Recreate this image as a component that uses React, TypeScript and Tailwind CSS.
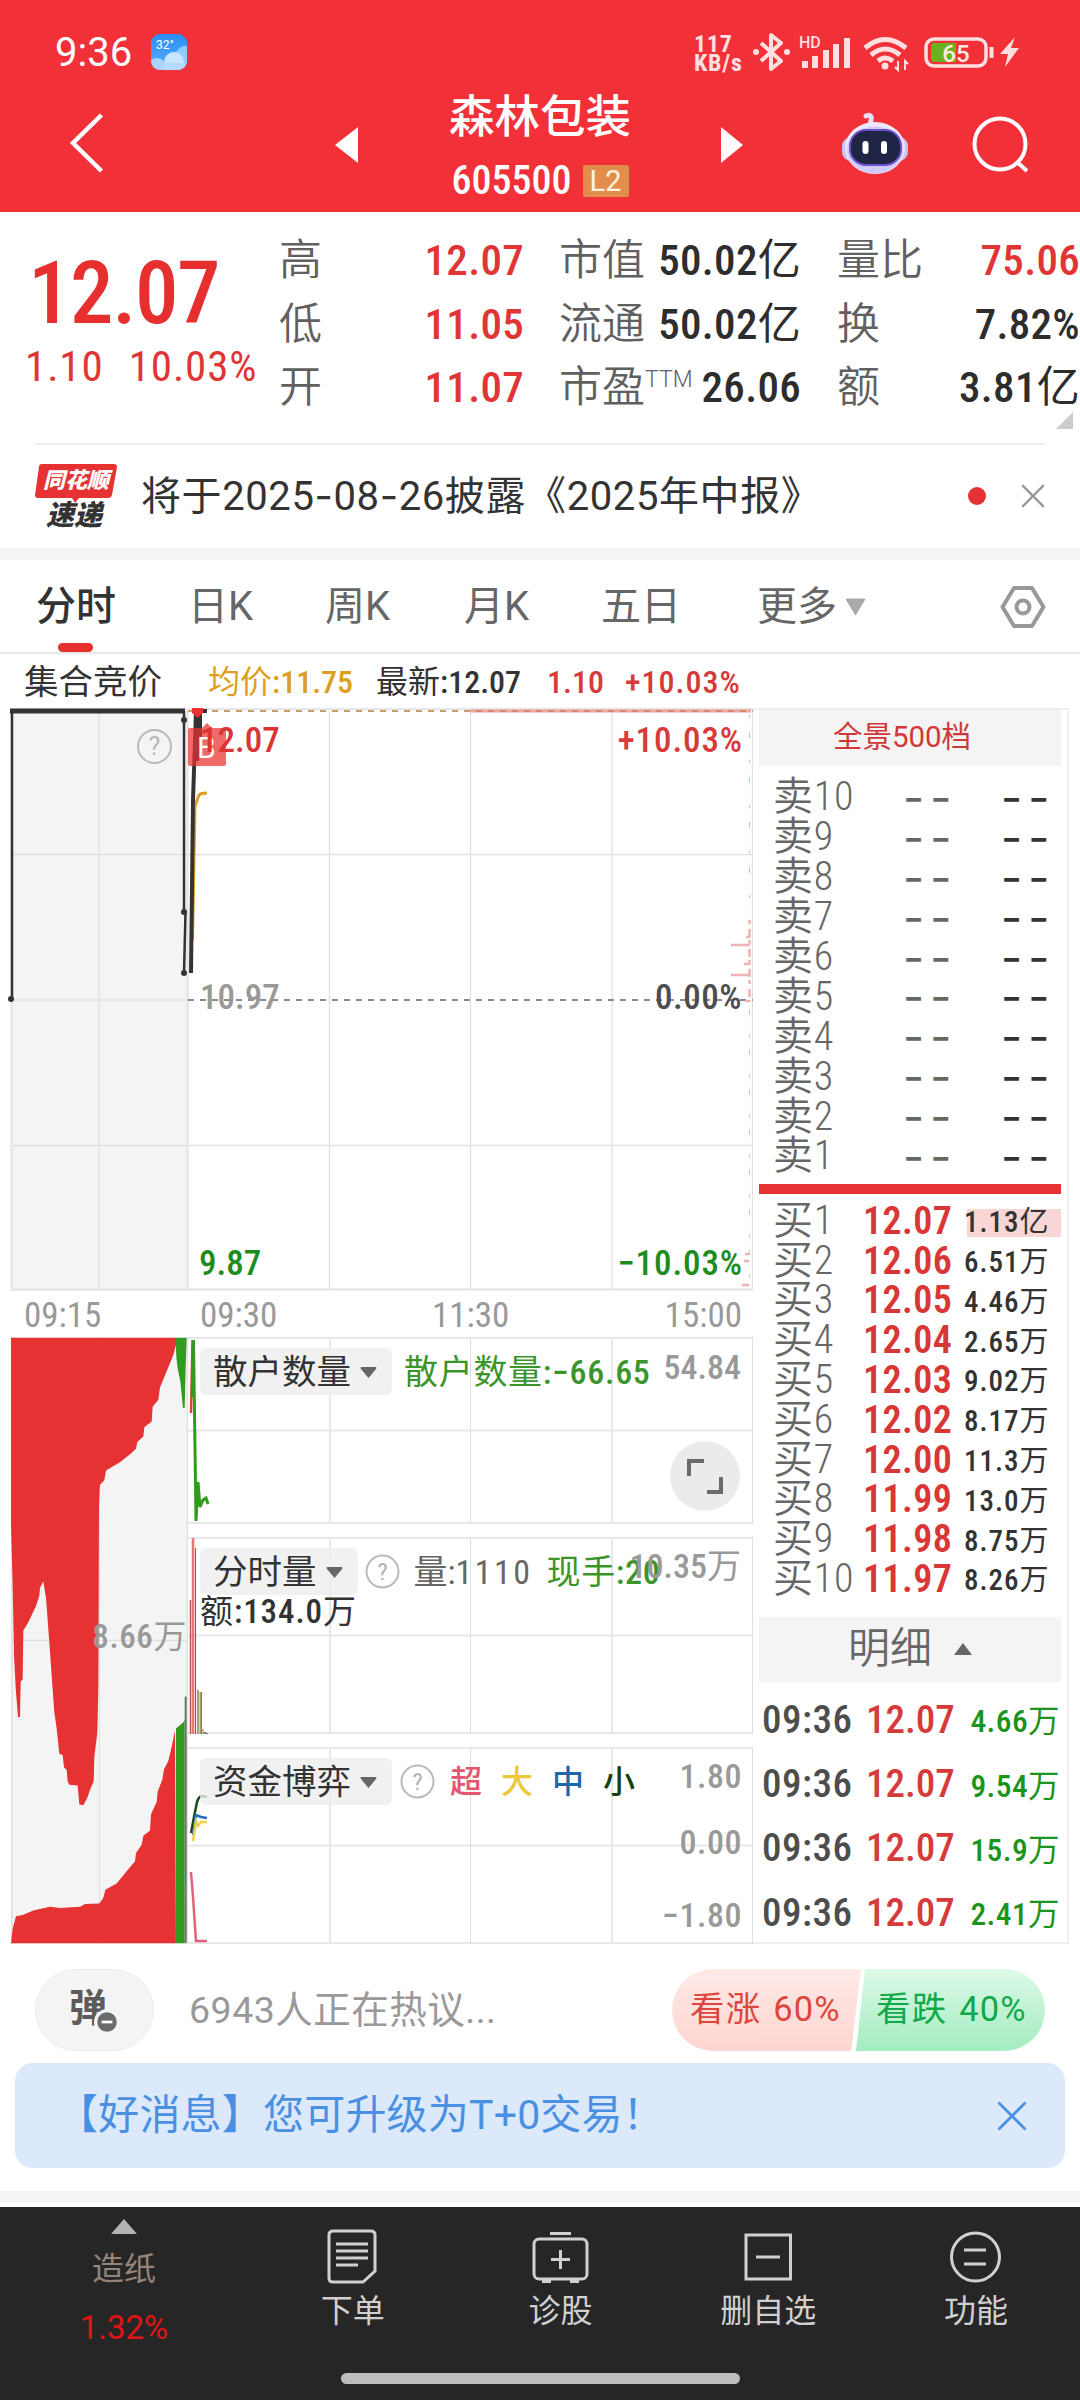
import type { ReactNode } from "react"

const COND = "font-['Roboto_Condensed','Noto_Sans_CJK_SC',sans-serif]"

const QUOTE_ROWS = [
  { a: "高", av: "12.07", b: "市值", bv: "50.02亿", c: "量比", cv: "75.06", cUp: true },
  { a: "低", av: "11.05", b: "流通", bv: "50.02亿", c: "换", cv: "7.82%" },
  { a: "开", av: "11.07", b: "市盈", sup: "TTM", bv: "26.06", c: "额", cv: "3.81亿" },
]

const SELLS = [10, 9, 8, 7, 6, 5, 4, 3, 2, 1]

const BUYS = [
  ["12.07", "1.13亿"],
  ["12.06", "6.51万"],
  ["12.05", "4.46万"],
  ["12.04", "2.65万"],
  ["12.03", "9.02万"],
  ["12.02", "8.17万"],
  ["12.00", "11.3万"],
  ["11.99", "13.0万"],
  ["11.98", "8.75万"],
  ["11.97", "8.26万"],
]

const TRADES = ["4.66万", "9.54万", "15.9万", "2.41万"]

export default function App() {
  return (
    <div className="h-[2400px] w-[1080px] overflow-hidden bg-white font-[Roboto,'Noto_Sans_CJK_SC',sans-serif] whitespace-nowrap text-[#333]">
      <header className="h-[212px] bg-[#f23038] text-white">
        <StatusBar />
        <TitleBar />
      </header>
      <Quote />
      <Notice />
      <div className="h-3 bg-[#f4f4f4]" />
      <Tabs />
      <InfoLine />
      <main className="flex h-[1236px]">
        <div className="w-[753px] shrink-0">
          <PriceChart />
          <div className={`${COND} flex h-[46px] items-center pt-[3px] pl-[24px] text-[35px] leading-none text-[#999]`}>
            <span className="w-[176px]">09:15</span>
            <span className="w-[232px]">09:30</span>
            <span className="grow">11:30</span>
            <span className="pr-[11px]">15:00</span>
          </div>
          <div className="flex">
            <AuctionVolume />
            <div className="flex w-[565px] flex-col gap-[13px]">
              <RetailPanel />
              <VolumePanel />
              <CapitalPanel />
            </div>
          </div>
        </div>
        <OrderBook />
      </main>
      <Discussion />
      <div className="mx-[15px] mt-3 flex h-[105px] items-center justify-between rounded-[18px] bg-[#dbe9fb] pr-[38px] pl-[42px] text-[41px] text-[#4a90e2]">
        <span className="tracking-[.2px]">【好消息】您可升级为T+0交易！</span>
        <Cross className="size-[30px]" width={1.8} />
      </div>
      <div className="mt-[23px] h-3 bg-[#f4f4f4]" />
      <BottomNav />
    </div>
  )
}

/* medium digits with regular-weight Chinese characters */
function Mixed({ text }: { text: string }) {
  return (
    <span className="font-medium">
      {text.split(/([\u4e00-\u9fff]+)/).map((part, i) =>
        i % 2 ? <span key={i} className="font-normal">{part}</span> : part,
      )}
    </span>
  )
}

function StatusBar() {
  return (
    <div className="flex h-[104px] items-center pl-[55px]">
      <span className="mt-0.5 w-[96px] text-[40px]">9:36</span>
      <svg className="size-9" viewBox="0 0 36 36">
        <defs>
          <linearGradient id="sky" x1="0" y1="0" x2="0" y2="1">
            <stop offset="0" stopColor="#2b8df7" />
            <stop offset="1" stopColor="#58b0fb" />
          </linearGradient>
          <clipPath id="skyClip"><rect width="36" height="36" rx="9" /></clipPath>
        </defs>
        <g clipPath="url(#skyClip)">
          <rect width="36" height="36" fill="url(#sky)" />
          <circle cx="34" cy="21" r="9" fill="#8fcbfd" />
          <circle cx="23" cy="28" r="10" fill="#c9e4fe" />
          <circle cx="6" cy="33" r="9" fill="#a9d5fd" />
          <rect x="12" y="29" width="24" height="8" fill="#b4dafe" />
        </g>
        <text x="5" y="15" fontSize="12" fill="#fff">32°</text>
      </svg>
      <div className={`${COND} mt-1 ml-[507px] w-[59px] text-[24px] leading-[19px] font-bold tracking-[.8px] text-[#ffe0e1]`}>
        <div>117</div>
        <div>KB/s</div>
      </div>
      <svg className="h-10 w-[270px]" viewBox="753 32 270 40" fill="none" stroke="#ffdfe0">
        <path d="M761 43L781 61L771 69V35L781 43L761 61" strokeWidth="4" strokeLinejoin="round" />
        <circle cx="756" cy="52" r="3" fill="#ffdfe0" stroke="none" />
        <circle cx="787" cy="52" r="3" fill="#ffdfe0" stroke="none" />
        <text x="799" y="48" fontSize="16" fontWeight="500" fill="#ffdfe0" stroke="none">HD</text>
        <path d="M805 68V61M815 68V56M826 68V50M836 68V44M847 68V38" strokeWidth="6" />
        <path d="M865 48Q885 31 906 48M871 55Q885 43 900 55" strokeWidth="5" />
        <path d="M878 61Q885 55 893 61" strokeWidth="5" />
        <circle cx="885" cy="66" r="3.5" fill="#ffdfe0" stroke="none" />
        <path d="M898 61V70L895 67M905 70V61L908 64" strokeWidth="2" />
        <rect x="926" y="39" width="60" height="27" rx="8" strokeWidth="3.5" />
        <path d="M991.5 47V58" strokeWidth="4" />
        <path d="M934 43H956V62H934Q931 62 931 59V46Q931 43 934 43Z" fill="#68b31d" stroke="none" />
        <text x="956" y="61.5" textAnchor="middle" fontSize="24" fontWeight="500" fill="#ffe9e0" stroke="none">65</text>
        <path d="M1015 37L1000 54H1008L1005 67L1019 48H1011Z" fill="#ffdfe0" stroke="none" />
      </svg>
    </div>
  )
}

function TitleBar() {
  return (
    <div className="flex h-[108px] items-center">
      <svg className="-mt-[30px] ml-[68px] h-[60px] w-[38px]" viewBox="68 114 38 60" fill="none" stroke="#fff" strokeWidth="4.5">
        <path d="M101.5 116L73 144L101.5 172" />
      </svg>
      <svg className="-mt-[26px] ml-[229px] h-9 w-[23px]" viewBox="0 0 23 36">
        <path d="M23 0V36L0 18Z" fill="#fff" />
      </svg>
      <div className="-mt-[20px] ml-[91px] w-[182px] text-center">
        <div className="text-[45.5px] leading-[65px] font-medium">森林包装</div>
        <div className="flex h-[61px] items-center justify-center gap-[11px]">
          <span className={`${COND} text-[40px] leading-none font-medium`}>605500</span>
          <span className="h-8 w-[46px] rounded-[2px] bg-[#e28d4b] text-[29px] leading-[33px] text-[#fff3e0]">L2</span>
        </div>
      </div>
      <svg className="-mt-[26px] ml-[90px] h-9 w-[22px]" viewBox="0 0 22 36">
        <path d="M0 0V36L22 18Z" fill="#fff" />
      </svg>
      <svg className="-mt-7 ml-[98px] h-[64px] w-[68px]" viewBox="841 112 68 64">
        <path d="M870 124Q874 113 866 116" fill="none" stroke="#e9dcf7" strokeWidth="5" strokeLinecap="round" />
        <rect x="842" y="137" width="66" height="24" rx="9" fill="#c9c4f3" />
        <ellipse cx="875" cy="148" rx="30" ry="26" fill="#ece9fc" />
        <ellipse cx="875" cy="150" rx="28" ry="23.5" fill="#cfcdf7" />
        <rect x="850" y="130" width="51" height="35" rx="16" fill="#1f2545" stroke="#6a4fc9" strokeWidth="2" />
        <rect x="862.5" y="141" width="6" height="13" rx="3" fill="#fff" />
        <rect x="881" y="141" width="6" height="13" rx="3" fill="#fff" />
      </svg>
      <svg className="-mt-[26px] ml-[62px] h-[60px] w-[60px]" viewBox="971 116 60 60" fill="none" stroke="#fff" strokeWidth="4">
        <circle cx="1000" cy="145" r="25.5" />
        <path d="M1017 163L1027 172" />
      </svg>
    </div>
  )
}

function Quote() {
  return (
    <section className="relative flex h-[231px] text-[#e13434]">
      <div className={`${COND} w-[279px] pt-[31px]`}>
        <div className="pl-[28px] text-[87px] leading-[100px] font-medium tracking-[-1.4px] text-[#e63030]">12.07</div>
        <div className="flex gap-[25px] pt-px pl-[25px] text-[43px] leading-[44px] tracking-[.9px]">
          <span>1.10</span>
          <span>10.03%</span>
        </div>
      </div>
      <div className="flex flex-col pt-[17px] text-[43px] leading-none">
        {QUOTE_ROWS.map((r) => (
          <div key={r.a} className="flex h-[63.5px] items-center">
            <span className="w-[78px] font-[350] text-[#606060]">{r.a}</span>
            <span className={`${COND} w-[167px] text-right tracking-[.3px]`}><Mixed text={r.av} /></span>
            <span className="flex w-[277px] items-center justify-between pl-[35px]">
              <span className="flex font-[350] text-[#606060]">
                {r.b}
                {r.sup && <span className="text-[23px] leading-[28px]">{r.sup}</span>}
              </span>
              <span className={`${COND} tracking-[.3px] text-[#2d2d2d]`}><Mixed text={r.bv} /></span>
            </span>
            <span className="w-[95px] pl-[36px] font-[350] text-[#606060]">{r.c}</span>
            <span className={`${COND} w-[184px] text-right tracking-[.3px] ${r.cUp ? "" : "text-[#2d2d2d]"}`}><Mixed text={r.cv} /></span>
          </div>
        ))}
      </div>
      <svg className="absolute right-[7px] bottom-[14px] h-[17px] w-[17px]" viewBox="0 0 17 17">
        <path d="M17 0V17H0Z" fill="#ccc" />
      </svg>
    </section>
  )
}

function Notice() {
  return (
    <section className="mx-[35px] flex h-[105px] items-center border-t-2 border-[#eee] pb-1">
      <div className="relative mt-1 h-[68px] w-[82px]">
        <svg className="absolute inset-0" viewBox="0 0 82 68">
          <path d="M7 1H79Q82 1 82 4L77 32Q76 35 73 35H44L40 40L37 35H3Q0 35 0 32L4 4Q4 1 7 1Z" fill="#e63232" />
        </svg>
        <div className="relative text-center text-[22px] leading-[35px] font-black text-white italic">同花顺</div>
        <div className="pt-0.5 pr-1 text-center text-[28px] leading-[32px] font-black italic">速递</div>
      </div>
      <span className="ml-[24px] grow pt-[3px] text-[40px] tracking-[.6px]">
        将于2025<Hyphen />08<Hyphen />26披露《2025年中报》
      </span>
      <span className="mt-0.5 size-[18px] rounded-full bg-[#e63232]" />
      <Cross className="mt-0.5 ml-[35px] size-[24px] text-[#999]" width={2} />
    </section>
  )
}

function Hyphen() {
  return <span className="font-['Inter']">-</span>
}

function Tabs() {
  return (
    <nav className="flex h-[94px] items-center border-b-2 border-[#e8e8e8] pt-0.5 pl-[36px] text-[40px] leading-none text-[#666]">
      <span className="relative flex h-full w-[152px] items-center font-medium text-[#333]">
        分时
        <i className="absolute bottom-0 left-[22px] h-[9px] w-[35px] rounded-full bg-[#e63030]" />
      </span>
      <span className="w-[137px]">日K</span>
      <span className="w-[139px]">周K</span>
      <span className="w-[137px]">月K</span>
      <span className="w-[156px]">五日</span>
      <span>更多</span>
      <svg className="ml-[8px] h-[18px] w-[21px]" viewBox="0 0 21 18">
        <path d="M1 1H20L10.5 17Z" fill="#aaa" stroke="#aaa" strokeWidth="1" strokeLinejoin="round" />
      </svg>
      <svg className="ml-[134px] h-[44px] w-[46px]" viewBox="0 0 46 44" fill="none" stroke="#999" strokeWidth="4">
        <path d="M14 3H32L43.5 22L32 41H14L2.5 22Z" strokeLinejoin="round" />
        <circle cx="23" cy="22" r="6.5" />
      </svg>
    </nav>
  )
}

function InfoLine() {
  return (
    <div className={`${COND} flex h-[54px] items-center pt-[2px] text-[32px] leading-none`}>
      <span className="w-[208px] pl-[24px] text-[34.5px]">集合竞价</span>
      <span className="w-[168px] text-[#dd9f20]"><Mixed text="均价:11.75" /></span>
      <span className="w-[171px]"><Mixed text="最新:12.07" /></span>
      <span className="w-[78px] font-medium text-[#d63a3a]">1.10</span>
      <span className="font-medium tracking-[1px] text-[#d63a3a]">+10.03%</span>
    </div>
  )
}

function PriceChart() {
  return (
    <svg className="block h-[583px] w-[753px]" viewBox="0 708 753 583" fill="none">
      <rect x="11" y="708" width="177" height="583" fill="#f4f4f4" />
      <path d="M99 709V1290M329.5 709V1290M470.5 709V1290M612 709V1290M752.5 709V1290M11 854.5H753M11 1145.5H753" stroke="#e0e0e0" strokeWidth="1.3" />
      <path d="M187.5 709V1290M11.5 709V1290M11 1289.5H753M11 1000H188M188 709H753" stroke="#e6e6e6" strokeWidth="2.5" />
      <path d="M188 711H753" stroke="#c3a06a" strokeWidth="2" strokeDasharray="6 6" />
      <path d="M470 711H751" stroke="#e87a70" strokeOpacity=".65" strokeWidth="3" />
      <path d="M188 1000H753" stroke="#8a8a8a" strokeWidth="2" strokeDasharray="6 6" />

      {/* price distribution on the right edge */}
      <g stroke="#efb3b3" strokeWidth="2.5">
        <path d="M731 945H750M744 964H750M731 975H750M746 937H750M745 1001H750M744 1261H749M742 1285H749M745 1254H749" />
        <path d="M749.5 715V900" strokeWidth="1" strokeDasharray="3 14 6 22" />
        <path d="M749.5 920V1002" strokeDasharray="4 5 8 3" />
        <path d="M749.5 1010V1289" strokeWidth="1" strokeDasharray="5 20 3 12" />
      </g>

      {/* auction session */}
      <path d="M12 999V711" stroke="#333" strokeWidth="2.5" />
      <path d="M10 711H185" stroke="#333" strokeWidth="5" />
      <path d="M184 711V912H185.5L184 973" stroke="#333" strokeWidth="2.5" />
      <g fill="#333">
        <circle cx="11" cy="999" r="3" />
        <circle cx="184" cy="720" r="3" />
        <circle cx="184" cy="912" r="3" />
        <circle cx="184" cy="973" r="3" />
      </g>

      {/* continuous session */}
      <path d="M192.5 940L195 806L199 795Q201 793 207 793" stroke="#dd9f20" strokeWidth="3" />
      <path d="M191 973L193 800L196 711" stroke="#333" strokeWidth="4" />
      <path d="M194 711H202V748L199 761H195Z" fill="#333" />
      <path d="M198 711H207" stroke="#333" strokeWidth="4" />
      <path d="M192 708H203V713L197.5 718L192 713Z" fill="#e63232" />
      <path d="M190 728H202L207 723L212 728H224Q226 728 226 730V764Q226 766 224 766H190Q188 766 188 764V730Q188 728 190 728Z" fill="#ec3030" fillOpacity=".72" />
      <text x="197" y="758" fontSize="30" fill="#fff">B</text>

      <circle cx="154.5" cy="746.5" r="16.5" stroke="#b8b8b8" strokeWidth="2" />
      <text x="154.5" y="755" textAnchor="middle" fontSize="25" fill="#b8b8b8">?</text>

      <g className={COND} fontSize="35" fontWeight="500">
        <text x="200" y="752" fill="#dc3333">12.07</text>
        <text x="743" y="752" textAnchor="end" letterSpacing=".9" fill="#d63a3a">+10.03%</text>
        <text x="200" y="1009" fill="#999">10.97</text>
        <text x="742" y="1009" textAnchor="end" letterSpacing=".5" fill="#4d4d4d">0.00%</text>
        <text x="199" y="1275" fill="#1c8c1c">9.87</text>
        <text x="743" y="1275" textAnchor="end" letterSpacing=".9" fill="#1c8c1c">−10.03%</text>
      </g>
    </svg>
  )
}

function AuctionVolume() {
  return (
    <div className="relative h-[607px] w-[188px] shrink-0">
      <svg className="block h-[607px] w-[188px]" viewBox="0 41 564 1487" preserveAspectRatio="none">
        <rect x="33" y="41" width="531" height="1487" fill="#f4f4f4" />
        <path d="M298 41V1528M33 784H560" stroke="#dedede" strokeWidth="3" />
        <path d="M36 41V1528M562 41V1528" stroke="#e2e2e2" strokeWidth="5" />
        <path
          fill="#e63232"
          d="M33 43H528V60L520 85L505 115L495 135L480 165L475 195L458 212L455 248L433 262L430 285L412 298L408 315L392 327L360 348L318 368L313 392L300 403L297 450L295 900L292 1010L283 1070L281 1130L270 1150L262 1170L250 1188L238 1186L233 1140L208 1138L203 1130L200 1102L192 1095L188 1065L178 1062L170 1000L163 960L155 870L148 790L138 680L130 640L120 655L118 675L108 700L85 740L70 760L68 880L62 885L60 972L54 972L47 900L42 820L38 650L33 500Z"
        />
        <path fill="#319b1f" d="M527 43H560L557 115L554 215H549L541 150L533 118L529 90Z" />
        <path
          fill="#e63232"
          d="M33 1526L38 1490L48 1460L68 1457L100 1446L150 1437L180 1440L240 1437L255 1430L298 1429L310 1415L316 1395L350 1380L380 1350L405 1325L408 1305L425 1285L430 1263L450 1250L453 1210L470 1180L473 1155L487 1125L492 1100L505 1080L515 1045L525 1005V1526Z"
        />
        <path fill="#319b1f" d="M525 1526L528 1000L550 985L554 978V1526Z" />
        <path fill="#707070" d="M554 922H560V1526H554Z" />
      </svg>
      <span className={`${COND} absolute top-[280px] right-[1px] text-[33px] leading-[40px] tracking-[.6px] text-[#999]`}>
        <Mixed text="8.66万" />
      </span>
    </div>
  )
}

/* grid frame shared by the three indicator panels, drawings sit behind the labels */
function Panel({ height, drawing, children }: { height: number; drawing: ReactNode; children: ReactNode }) {
  const mid = height / 2
  return (
    <div className="relative" style={{ height }}>
      <svg className="absolute inset-0 overflow-visible" width="565" height={height} fill="none">
        <path d={`M0 1H565M0 ${mid}H565M0 ${height - 1}H565M142 0V${height}M424 0V${height}`} stroke="#e8e8e8" strokeWidth="2" />
        <path d={`M282.5 0V${height}M564.5 0V${height}`} stroke="#dedede" strokeWidth="1" />
        {drawing}
      </svg>
      <div className={`${COND} relative flex pt-[11px] text-[34px] leading-[49px]`}>{children}</div>
    </div>
  )
}

function Picker({ label }: { label: string }) {
  return (
    <span className="ml-3 flex h-[47px] items-center rounded-md bg-[#ededed]/80 pt-0.5 pr-[15px] pl-[13px] text-[34.5px]">
      {label}
      <svg className="ml-[9px] h-[11px] w-[17px]" viewBox="0 0 17 11">
        <path d="M1 0H16Q17 1 16 2L8.5 11L1 2Q0 1 1 0Z" fill="#666" />
      </svg>
    </span>
  )
}

function Help() {
  return (
    <svg className="mt-[6px] size-[35px]" viewBox="0 0 35 35" fill="none">
      <circle cx="17.5" cy="17.5" r="16" stroke="#bbb" strokeWidth="2" />
      <text x="17.5" y="26" textAnchor="middle" fontSize="24" fill="#b0b0b0">?</text>
    </svg>
  )
}

function RetailPanel() {
  return (
    <Panel
      height={187}
      drawing={
        <>
          <path d="M3 76L4.5 3" stroke="#e0442f" strokeWidth="2.5" />
          <path d="M4 60L5.5 3L8 184L10 145L12 170L15 163L18 161L20 167" stroke="#319b1f" strokeWidth="3" />
        </>
      }
    >
      <Picker label="散户数量" />
      <span className="ml-[12px] tracking-[.7px] text-[#3b952b]"><Mixed text="散户数量:−66.65" /></span>
      <span className="absolute top-[6px] right-[12px] text-[#999]"><Mixed text="54.84" /></span>
      <button className="absolute top-[104px] right-[13px] flex size-[70px] items-center justify-center rounded-full bg-[#ebebeb]">
        <svg className="size-9" viewBox="0 0 36 36" fill="none" stroke="#6b6b6b" strokeWidth="4">
          <path d="M2 18V3H17M20 34H34V19" />
        </svg>
      </button>
    </Panel>
  )
}

function VolumePanel() {
  return (
    <Panel
      height={197}
      drawing={
        <>
          <path d="M2.5 63V197" stroke="#b85450" strokeWidth="1.5" />
          <path d="M5 1V197" stroke="#ef7373" strokeWidth="2.5" />
          <path d="M7.5 11V197" stroke="#c94545" strokeWidth="1.2" />
          <path d="M10 153V197M12.5 155V197" stroke="#a7a16b" strokeWidth="2" />
          <path d="M13.5 155V197M15 192V197" stroke="#c25a50" strokeWidth="1" />
          <path d="M17 195V197M19 196V197" stroke="#777" strokeWidth="2" />
        </>
      }
    >
      <div>
        <div className="flex">
          <Picker label="分时量" />
          <span className="ml-[7px]"><Help /></span>
          <span className="ml-[14px] text-[#666]">量:<span className="tracking-[2.5px]">1110</span></span>
          <span className="ml-[14px] tracking-[.6px] text-[#3b952b]"><Mixed text="现手:20" /></span>
        </div>
        <div className="-mt-px ml-3 text-[33px] leading-[31px] tracking-[.9px]"><Mixed text="额:134.0万" /></div>
      </div>
      <span className="absolute top-[5px] right-[12px] text-[#999]"><Mixed text="10.35万" /></span>
    </Panel>
  )
}

function CapitalPanel() {
  return (
    <Panel
      height={197}
      drawing={
        <g strokeWidth="2.5">
          <path d="M3 86L6 70L9 55Q11 49 14 49L19 50" stroke="#18491a" />
          <path d="M5 88L8 68L13 70L19 71" stroke="#2a6fb5" />
          <path d="M5 94L8 74L10 79L13 75H19" stroke="#edd04c" />
          <path d="M3 125L5 150L8 194H19" stroke="#e0617a" />
        </g>
      }
    >
      <Picker label="资金博弈" />
      <span className="ml-[8px]"><Help /></span>
      <span className="ml-[15px] flex text-[32px] font-medium">
        <span className="w-[51px] text-[#e4566f]">超</span>
        <span className="w-[51px] text-[#ecc93a]">大</span>
        <span className="w-[51px] text-[#1f67ab]">中</span>
        <span className="text-[#17420f]">小</span>
      </span>
      <div className="absolute top-[5px] right-[11px] text-right font-medium tracking-[.5px] text-[#999]">
        <div className="h-[66px]">1.80</div>
        <div className="h-[73px]">0.00</div>
        <div>−1.80</div>
      </div>
    </Panel>
  )
}

function OrderBook() {
  return (
    <aside className="flex w-[316px] flex-col border-2 border-l-0 border-[#efefef] px-[6px] leading-none">
      <div className="flex h-[56px] shrink-0 items-center justify-center bg-[#f4f4f4] pr-[16px] text-[29.5px] text-[#d03838]">
        全景500档
      </div>
      <div className="mt-[11px]">
        {SELLS.map((n) => (
          <div key={n} className="flex h-[39.9px] items-center pl-[14px] text-[40px] leading-[36px] text-[#666]">
            <span className={`${COND} w-[130px] shrink-0 pt-px font-[350] tracking-[.8px]`}>卖{n}</span>
            <span className="w-[98px] shrink-0 font-['Inter'] text-[46px] tracking-[6px]">--</span>
            <span className="shrink-0 font-['Inter'] text-[46px] tracking-[6px] text-[#333]">--</span>
          </div>
        ))}
      </div>
      <div className="mt-[8px] h-[10px] shrink-0 bg-[#e63232]" />
      <div className="mt-[7px]">
        {BUYS.map(([price, qty], i) => (
          <div key={price} className={`${COND} flex h-[39.8px] items-center pl-[14px]`}>
            <span className="w-[90px] text-[40px] leading-[36px] font-[350] tracking-[.8px] text-[#666]">买{i + 1}</span>
            <span className="w-[104px] text-[38px] font-semibold tracking-[.4px] text-[#d93636]">{price}</span>
            <span className={`mt-[4px] flex h-7 grow items-center text-[29px] tracking-[1px] ${i === 0 ? "bg-[#f9d6d6]" : ""}`}>
              <span className="-ml-[3px]"><Mixed text={qty} /></span>
            </span>
          </div>
        ))}
      </div>
      <div className="mt-[18px] flex h-[65px] shrink-0 items-center justify-center bg-[#f4f4f4] text-[42px] text-[#666]">
        <span className="font-[350]">明细</span>
        <svg className="ml-[22px] h-3 w-[18px]" viewBox="0 0 18 12">
          <path d="M9 0L18 12H0Z" fill="#666" />
        </svg>
      </div>
      <div className={`${COND} -mb-3 flex flex-col pt-[6px] text-[39px] font-medium`}>
        {TRADES.map((qty) => (
          <div key={qty} className="flex h-[64.4px] shrink-0 items-center justify-between pr-px pl-[3px]">
            <span className="w-[104px] tracking-[.5px] text-[#4d4d4d]">09:36</span>
            <span className="grow text-[#d63a3a]">12.07</span>
            <span className="mt-1 text-[31.5px] tracking-[.4px] text-[#1c931c]"><Mixed text={qty} /></span>
          </div>
        ))}
      </div>
    </aside>
  )
}

function Discussion() {
  return (
    <section className="mt-[25px] flex h-[82px] items-center px-[35px]">
      <div className="relative h-[82px] w-[119px] rounded-full border border-[#ececec] bg-[#f4f4f4] pl-[33px] text-[38px] leading-[76px] font-bold text-[#5c5c5c]">
        弹
        <svg className="absolute top-[39px] left-[58px] size-[26px]" viewBox="0 0 24 24">
          <circle cx="12" cy="12" r="10.5" fill="#6b6b6b" stroke="#f4f4f4" strokeWidth="3" />
          <path d="M7 12H17" stroke="#fff" strokeWidth="2.5" />
        </svg>
      </div>
      <span className="ml-[35px] grow text-[37.5px] tracking-[.5px] text-[#999]">6943人正在热议...</span>
      <div className="relative h-[82px] w-[373px]">
        <svg className="absolute inset-0" viewBox="0 0 373 82">
          <defs>
            <linearGradient id="up" x1="0" y1="0" x2="0" y2="1">
              <stop offset="0" stopColor="#ffeae8" />
              <stop offset="1" stopColor="#fdd5d0" />
            </linearGradient>
            <linearGradient id="down" x1="0" y1="0" x2="0" y2="1">
              <stop offset="0" stopColor="#ddf9e8" />
              <stop offset="1" stopColor="#a3ecc0" />
            </linearGradient>
          </defs>
          <path d="M41 0H189L179 82H41A41 41 0 0 1 41 0Z" fill="url(#up)" />
          <path d="M193 0H332A41 41 0 0 1 332 82H184Z" fill="url(#down)" />
        </svg>
        <div className="relative flex h-full items-center text-[34.5px] tracking-[1.2px] [word-spacing:2px]">
          <span className="w-[187px] pl-[18px] text-[#e0453c]">看涨 60%</span>
          <span className="pl-[17px] text-[#12a84a]">看跌 40%</span>
        </div>
      </div>
    </section>
  )
}

function BottomNav() {
  return (
    <footer className="mt-1 flex h-[193px] flex-col bg-[#262626] text-[32px] text-[#d0d0d0]">
      <div className="flex h-[166px]">
        <div className="flex w-[249px] flex-col items-center pr-[1px] text-[#948479]">
          <svg className="mt-[12px] h-[15px] w-[26px]" viewBox="0 0 26 15">
            <path d="M13 0L26 15H0Z" fill="#b3b3b3" />
          </svg>
          <span className="mt-[13px] leading-[44px]">造纸</span>
          <span className="mt-[15px] text-[33px] leading-[44px] text-[#e01414]">1.32%</span>
        </div>
        <NavItem label="下单">
          <path d="M9 3H47Q51 3 51 7V43L39 54H9Q5 54 5 50V7Q5 3 9 3Z" />
          <path d="M12 16H44M12 23H44M12 30H44M12 37H34" />
        </NavItem>
        <NavItem label="诊股">
          <rect x="2" y="11" width="53" height="40" rx="5" />
          <path d="M18 5.5H39M28.5 22V41M19 31.5H38M10 53.5H19M38 53.5H47" />
        </NavItem>
        <NavItem label="删自选">
          <rect x="6" y="7" width="44.5" height="44" />
          <path d="M16 29H40" />
        </NavItem>
        <NavItem label="功能">
          <circle cx="28.5" cy="29" r="24" />
          <path d="M17 22H39M17 36H39" />
        </NavItem>
      </div>
      <div className="h-[11px] w-[399px] self-center rounded-full bg-[#bdbdbd]" />
    </footer>
  )
}

function NavItem({ label, children }: { label: string; children: ReactNode }) {
  return (
    <div className="flex w-[207.7px] flex-col items-center pt-[21px]">
      <svg className="h-[57px] w-[57px]" viewBox="0 0 57 57" fill="none" stroke="#d0d0d0" strokeWidth="3">
        {children}
      </svg>
      <span className="mt-[4px] leading-[44px]">{label}</span>
    </div>
  )
}

function Cross({ className, width }: { className: string; width: number }) {
  return (
    <svg className={`${className} shrink-0`} viewBox="0 0 20 20" fill="none" stroke="currentColor" strokeWidth={width}>
      <path d="M1 1L19 19M19 1L1 19" />
    </svg>
  )
}
